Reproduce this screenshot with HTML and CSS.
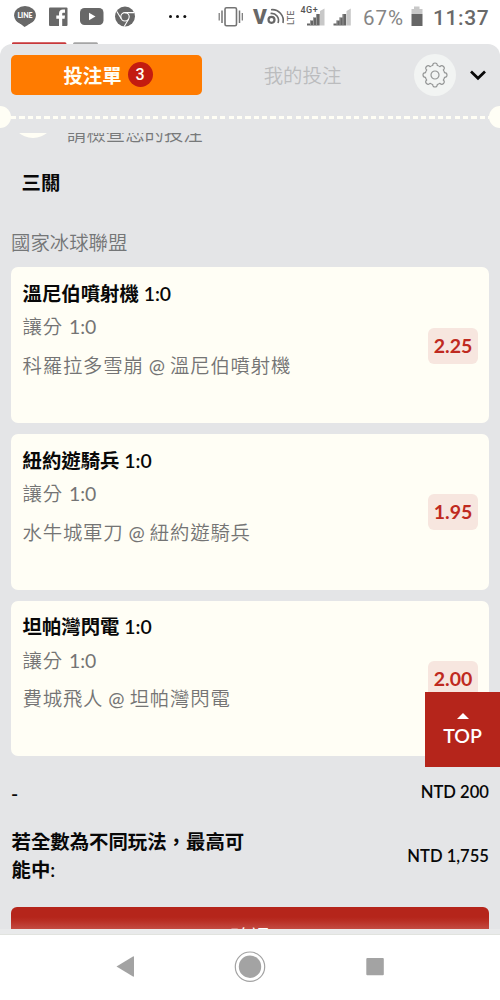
FILE: index.html
```html
<!DOCTYPE html>
<html lang="zh-Hant">
<head>
<meta charset="utf-8">
<title>投注單</title>
<link rel="stylesheet" href="styles.css">
</head>
<body>
<div class="phone">
  <header class="status">
    <svg class="status-icons" width="500" height="44" viewBox="0 0 500 44">
      <g fill="#686868">
        <ellipse cx="25" cy="15.300" rx="10.900" ry="9.300"/>
        <path d="M17 21L24.500 27Q31 23.500 34 19Z"/>
        <rect x="49" y="7.500" width="18.500" height="18.500" rx="1"/>
        <rect x="80" y="8" width="23.500" height="17" rx="4.500"/>
        <circle cx="125" cy="16.500" r="10"/>
      </g>
      <text class="line-logo" x="25" y="17.800" text-anchor="middle">LINE</text>
      <path d="M59 26V18.800H56.300V15.600H59V13.500C59 10.800 60.700 9.500 63 9.500H65V12.700H63.600C62.500 12.700 62.200 13.200 62.200 14.100V15.600H65L64.600 18.800H62.200V26Z" fill="#fff"/>
      <path d="M89 12.800L95.500 16.500L89 20.200Z" fill="#fff"/>
      <g fill="none" stroke="#fff" stroke-width="1.100"><circle cx="125" cy="16.800" r="4.200"/><path d="M125 12.600H134M121.300 18.800L116.800 11.500M128.700 19L124.200 26.500"/></g>
      <g fill="#111"><circle cx="170.500" cy="16.500" r="1.500"/><circle cx="177.500" cy="16.500" r="1.500"/><circle cx="184.800" cy="16.500" r="1.500"/></g>
      <g fill="none" stroke="#747474"><rect x="225" y="7.700" width="11.500" height="18" rx="1.500" stroke-width="1.600"/><path d="M222 10.500V23M239.500 10.500V23" stroke-width="1.500"/><path d="M219.200 13V20.500M242.300 13V20.500" stroke-width="1.200"/></g>
      <text class="volte" x="253" y="24">V</text>
      <g fill="none" stroke="#686868"><circle cx="271.500" cy="19.800" r="3" stroke-width="2.200"/><path d="M270.500 13.500A7 7 0 0 1 278 23" stroke-width="1.600"/><path d="M271 9.700A11 11 0 0 1 283 23" stroke-width="1.600"/></g>
      <text class="lte" transform="translate(293.500 25) rotate(-90)">LTE</text>
      <text class="network" x="300.500" y="12.500">4G+</text>
      <path d="M307 25.500V23.500H310V20.500H313V17.500H316V14H319.700V25.500Z" fill="#666"/><path d="M320 25.500V11L324.500 8.500V25.500Z" fill="#c8c8c8"/><path d="M310.500 20V26M313.500 17V26M316.500 14V26" stroke="#aaa" stroke-width=".7"/>
      <path d="M333.500 25.500V23.500H336.500V20.500H339.500V17.500H342.500V14H346.200V25.500Z" fill="#666"/><path d="M346.500 25.500V11L350.800 8.500V25.500Z" fill="#c8c8c8"/><path d="M337 20V26M340 17V26M343 14V26" stroke="#aaa" stroke-width=".7"/>
      <text class="percent" x="363" y="24.500">67%</text>
      <path d="M411.500 9H414V6.500H419.500V9H422.500V14H411.500Z" fill="#c8c8c8"/><rect x="411.500" y="14" width="11" height="12" fill="#666"/>
      <text class="time" x="433" y="24.500">11:37</text>
      <path d="M12 44V43Q12 42.200 13.500 42.200H65Q66.500 42.200 66.500 44Z" fill="#c8383b"/>
      <path d="M73 44Q73 42.200 74.500 42.200H96.500Q98 42.200 98 44Z" fill="#a5a5a5"/>
    </svg>
  </header>
  <main class="slip">
    <nav class="tabs">
      <div class="tab tab-active">投注單<span class="count">3</span></div>
      <div class="tab tab-muted">我的投注</div>
      <div class="settings">
        <svg width="28" height="28" viewBox="-14 -14 28 28" fill="none" stroke="#949696" stroke-width="1.200" stroke-linejoin="round"><circle r="4"/><path d="M-2.300-9.500Q-2.300-12 0-12T2.300-9.500Q3.500-9.300 5-8.300Q6.700-10.200 8.500-8.500T8.300-5Q9.300-3.500 9.500-2.300Q12-2.300 12 0T9.500 2.300Q9.300 3.500 8.300 5Q10.200 6.700 8.500 8.500T5 8.300Q3.500 9.300 2.300 9.500Q2.300 12 0 12T-2.300 9.500Q-3.500 9.300-5 8.300Q-6.700 10.200-8.500 8.500T-8.300 5Q-9.300 3.500-9.500 2.300Q-12 2.300-12 0T-9.500-2.300Q-9.300-3.500-8.300-5Q-10.200-6.700-8.500-8.500T-5-8.300Q-3.500-9.300-2.300-9.500Z"/></svg>
      </div>
      <svg class="chevron" width="18" height="12" viewBox="0 0 18 12"><path d="M2 2.500L9 9.300L16 2.500" fill="none" stroke="#080808" stroke-width="2.700"/></svg>
    </nav>
    <div class="perforation"><i class="notch"></i><i class="dashes"></i><i class="notch"></i></div>
    <div class="scroll">
      <div class="notice"><i class="notice-icon"></i><span>請檢查您的投注</span></div>
      <h2 class="parlay">三關</h2>
      <div class="league">國家冰球聯盟</div>
      <div class="cards">
        <section class="card">
          <div class="bet"><div class="pick">溫尼伯噴射機 1:0</div><div class="market">讓分 <span class="latin">1:0</span></div><div class="match">科羅拉多雪崩 <span class="latin">@</span> 溫尼伯噴射機</div></div>
          <div class="odds">2.25</div>
        </section>
        <section class="card">
          <div class="bet"><div class="pick">紐約遊騎兵 1:0</div><div class="market">讓分 <span class="latin">1:0</span></div><div class="match">水牛城軍刀 <span class="latin">@</span> 紐約遊騎兵</div></div>
          <div class="odds">1.95</div>
        </section>
        <section class="card">
          <div class="bet"><div class="pick">坦帕灣閃電 1:0</div><div class="market">讓分 <span class="latin">1:0</span></div><div class="match">費城飛人 <span class="latin">@</span> 坦帕灣閃電</div></div>
          <div class="odds">2.00</div>
        </section>
      </div>
      <div class="row stake"><span class="dash">-</span><span class="money">NTD 200</span></div>
      <div class="row payout"><span class="payout-label">若全數為不同玩法，最高可能中:</span><span class="money">NTD 1,755</span></div>
      <div class="confirm">確認</div>
    </div>
    <div class="slip-foot"></div>
  </main>
  <footer class="navbar">
    <svg width="500" height="65" viewBox="0 0 500 65"><path d="M116.500 31.500L133 21.500Q134 21 134 22V41Q134 42 133 41.500Z" fill="#a3a3a3"/><circle cx="250" cy="31.700" r="14.700" fill="none" stroke="#a3a3a3" stroke-width="1.200"/><circle cx="250" cy="31.700" r="11.200" fill="#a3a3a3"/><rect x="366.300" y="23" width="17.500" height="17.300" rx="1" fill="#a3a3a3"/></svg>
  </footer>
  <div class="to-top"><i class="up"></i>TOP</div>
</div>
</body>
</html>
```

FILE: styles.css
```css
* { box-sizing: border-box; }
body { margin: 0; background: #fff; font-family: Lato, "Noto Sans CJK TC", sans-serif; font-size: 19.4px; }
.phone { position: relative; width: 500px; height: 1000px; display: flex; flex-direction: column; overflow: hidden; }
.status { height: 44px; flex: none; }
.status-icons { display: block; }
.line-logo { font: 900 7px Lato, sans-serif; fill: #fff; }
.volte { font: 900 21px Roboto, sans-serif; fill: #686868; }
.lte { font: 500 9px Roboto, sans-serif; fill: #747474; }
.network { font: 500 9px Roboto, sans-serif; fill: #555; letter-spacing: .5px; }
.percent { font: 400 20.5px Roboto, sans-serif; fill: #858585; letter-spacing: 1px; }
.time { font: 500 21px Roboto, sans-serif; fill: #696969; letter-spacing: .6px; }

.slip { flex: 1; min-height: 0; display: flex; flex-direction: column; background: #e4e5e7; border-radius: 12px 12px 0 0; overflow: hidden; }
.tabs { display: flex; align-items: center; height: 61.500px; padding: 0 12px 0 11px; flex: none; }
.tab { display: flex; align-items: center; justify-content: center; height: 40px; }
.tab-active { width: 191px; gap: 6px; padding-left: 3px; border-radius: 5px; background: #ff7b00; color: #fffef5; font-weight: 600; }
.count { width: 25px; height: 25px; border-radius: 50%; background: #c31c10; font-family: Roboto, sans-serif; font-size: 16px; line-height: 25px; font-weight: 500; text-align: center; }
.tab-muted { width: 200px; color: #bbbcbe; font-weight: 350; padding-left: 1px; }
.settings { width: 42px; height: 42px; margin-left: 12px; border-radius: 50%; background: #f2f4f3; display: flex; align-items: center; justify-content: center; }
.chevron { margin-left: 13px; }
.perforation { display: flex; align-items: center; height: 22px; flex: none; }
.notch { width: 22px; height: 22px; margin: 0 -11px; border-radius: 50%; background: #fffef5; flex: none; }
.dashes { flex: 1; height: 3px; margin: 2px 11px 0; background: repeating-linear-gradient(90deg, #fffef5 0 5.2px, transparent 5.2px 8.37px); }
.scroll { flex: 1; min-height: 0; margin-top: 5px; padding: 0 11px; overflow: hidden; }
.notice { display: flex; align-items: center; height: 44px; margin-top: -22px; color: #77797a; font-weight: 350; }
.notice-icon { width: 44px; height: 44px; margin-top: -34px; border-radius: 50%; background: #fffef5; }
.notice span { margin-left: 12px; }
.parlay { margin: 13px 0 0 10.500px; font-size: 19.4px; line-height: 30px; font-weight: 700; color: #080808; }
.league { margin-top: 30px; line-height: 30px; color: #747677; font-weight: 350; }
.cards { display: flex; flex-direction: column; gap: 11.1px; margin-top: 9.900px; }
.card { display: flex; align-items: center; justify-content: space-between; height: 155.6px; padding: 0 11px 0 11.500px; border-radius: 7px; background: #fffef5; }
.bet { align-self: flex-start; padding-top: 11.500px; }
.pick { line-height: 30px; font-weight: 600; color: #080808; }
.market, .match { line-height: 30px; font-weight: 350; letter-spacing: .8px; color: #747474; }
.market { margin-top: 3.500px; }
.match { margin-top: 8.500px; word-spacing: -1px; }
.latin { font-weight: 400; letter-spacing: 0; }
.odds { width: 50px; height: 36px; margin-top: 1px; border-radius: 6px; background: #f7e6df; color: #bf2a20; font-size: 19.500px; line-height: 36px; font-weight: 700; text-align: center; }
.row { display: flex; align-items: center; justify-content: space-between; font-weight: 600; color: #080808; }
.stake { height: 30px; margin-top: 20.500px; }
.dash { padding-top: 3px; }
.payout { height: 58px; margin-top: 20.500px; }
.payout-label { width: 240px; padding-left: .5px; line-height: 28.500px; }
.money { font-size: 16.600px; }
.confirm { height: 60px; margin-top: 21.500px; border-radius: 6px; background: linear-gradient(#b5251b 0 10px, #b92e24 14px, #c34b42 22px); color: #fff; line-height: 59px; text-align: center; }
.slip-foot { height: 6px; flex: none; background: #e9eaeb; border-bottom: 1px solid #e1e3df; }
.navbar { height: 65px; flex: none; background: #fff; }
.to-top { position: absolute; right: 0; top: 692px; width: 75px; height: 75px; padding-top: 21px; display: flex; flex-direction: column; align-items: center; background: #b5251b; color: #fff; font-size: 19.500px; line-height: 24px; font-weight: 600; }
.up { border: 6px solid transparent; border-top: 0; border-bottom-color: #fff; margin-bottom: 5px; }
```
